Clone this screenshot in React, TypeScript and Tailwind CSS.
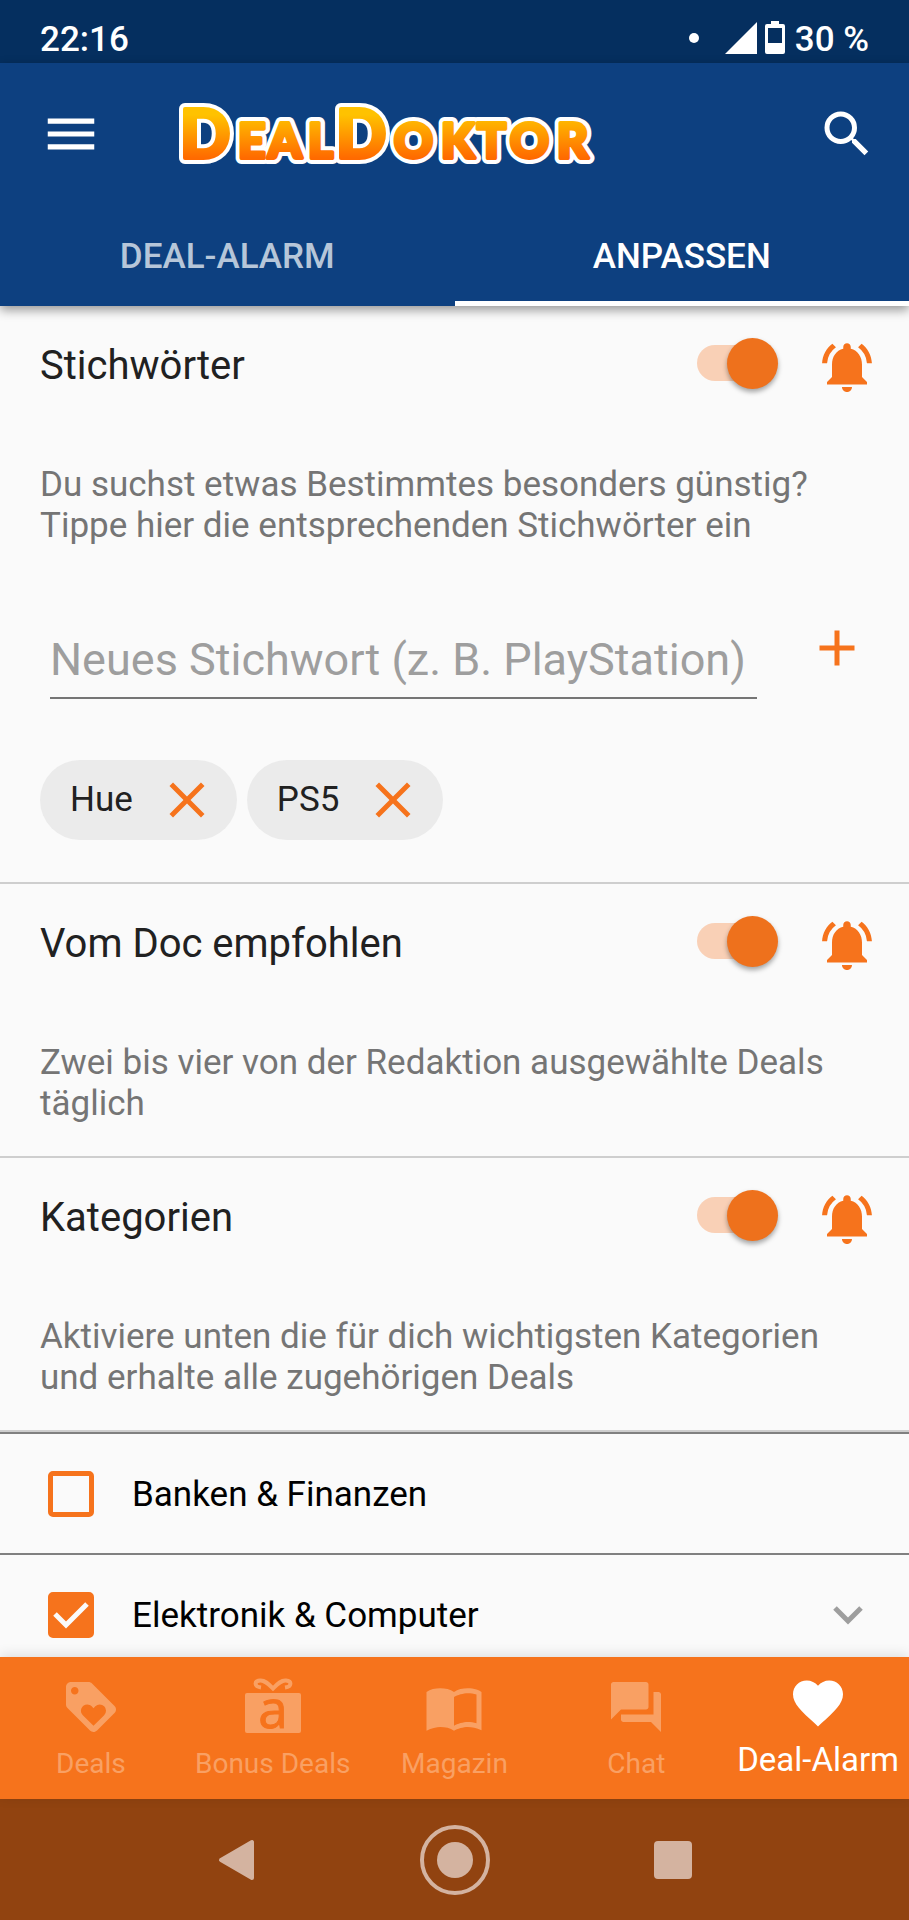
import { useState } from 'react';
import type { ReactNode } from 'react';
import { MdAdd, MdClose, MdFavorite, MdForum, MdLoyalty, MdMenu, MdNotificationsActive, MdSearch } from 'react-icons/md';

function StatusBar() {
  return (
    <div className="flex h-[63px] items-center justify-between bg-[#052f5f] px-10 pt-3 text-[35px] font-medium text-white">
      <span className="pt-[6px]">22:16</span>
      <div className="flex items-center">
        <span className="mr-[26px] size-[10px] rounded-full bg-white" />
        <svg viewBox="0 0 32 32" className="mr-2 size-8 fill-white"><path d="M32 0V32H0z" /></svg>
        <svg viewBox="0 0 20 33" className="mr-[10px] h-[33px] w-5 fill-white" fillRule="evenodd">
          <path d="M6 0h8v3h4a2 2 0 0 1 2 2v26a2 2 0 0 1-2 2H2a2 2 0 0 1-2-2V5a2 2 0 0 1 2-2h4zM3 7v15h14V7z" />
        </svg>
        <span className="pt-[6px]">30 %</span>
      </div>
    </div>
  );
}

function Logo() {
  return (
    <svg viewBox="-4 -16 430 96" className="h-24 w-[430px]" role="img" aria-label="DealDoktor">
      <defs>
        <linearGradient id="logoFill" gradientUnits="userSpaceOnUse" x1="0" y1="8" x2="0" y2="56">
          <stop offset="0.1" stopColor="#ffc200" />
          <stop offset="1" stopColor="#ff6a00" />
        </linearGradient>
      </defs>
      <g fontFamily="Lato" fontWeight="900" strokeLinejoin="round">
        {/* white outline first, gradient letters on top */}
        {[true, false].map(outline => (
          <text key={String(outline)} y="56" fill="url(#logoFill)" stroke={outline ? '#fff' : 'url(#logoFill)'} strokeWidth={outline ? 12 : 4} aria-hidden={outline}>
            <tspan x="-2" fontSize="66">D</tspan>
            <tspan x="56 86 126" fontSize="48">EAL</tspan>
            <tspan x="154" fontSize="66">D</tspan>
            <tspan x="212 259 295 328 375" fontSize="48">OKTOR</tspan>
          </text>
        ))}
      </g>
    </svg>
  );
}

function Switch({ label }: { label: string }) {
  const [on, setOn] = useState(true);
  return (
    <label className="relative flex h-[52px] w-20 items-center">
      <input type="checkbox" role="switch" aria-label={label} checked={on} onChange={() => setOn(!on)} className="peer sr-only" />
      <span className="h-9 w-[76px] rounded-full bg-gray-300 peer-checked:bg-[#f9d0b6]" />
      <span className="absolute left-0 size-[51px] rounded-full bg-white shadow-[0_3px_5px_rgba(0,0,0,0.35)] peer-checked:left-[30px] peer-checked:bg-[#ee711c]" />
    </label>
  );
}

function Section({ title, text, children }: { title: string; text: string; children?: ReactNode }) {
  return (
    <section className="border-b-2 border-[#cecece] px-10 pb-8">
      <div className="flex h-[114px] items-center">
        <h2 className="flex-1 pt-[6px] text-[40px] text-[#212121]">{title}</h2>
        <Switch label={title} />
        <button aria-label={`Benachrichtigungen ${title}`} className="-mr-2 ml-10 pt-2 text-[#f6731c]">
          <MdNotificationsActive size={60} />
        </button>
      </div>
      <p className="mt-11 text-[35px] leading-[41px] text-[#757575]">{text}</p>
      {children}
    </section>
  );
}

function Chip({ label, onRemove }: { label: string; onRemove: () => void }) {
  return (
    <span className="flex h-20 items-center gap-6 rounded-full bg-[#ebebeb] pr-5 pl-[30px] text-[35px] text-[#212121]">
      {label}
      <button aria-label={`${label} entfernen`} onClick={onRemove} className="text-[#f6731c]"><MdClose size={60} /></button>
    </span>
  );
}

function Keywords() {
  const [words, setWords] = useState(['Hue', 'PS5']);
  const [value, setValue] = useState('');

  const add = () => {
    if (!value.trim()) return;
    setWords([...words, value.trim()]);
    setValue('');
  };

  return (
    <>
      <div className="mt-[66px] flex items-start pr-0.5 pl-[10px]">
        <input
          aria-label="Neues Stichwort"
          placeholder="Neues Stichwort (z. B. PlayStation)"
          value={value}
          onChange={e => setValue(e.target.value)}
          className="h-[87px] min-w-0 flex-1 border-b-2 border-[#757575] pt-[10px] text-[45px] text-[#212121] outline-none placeholder:text-[#9e9e9e]"
        />
        <button aria-label="Hinzufügen" onClick={add} className="ml-[50px] pt-[6px] text-[#f6731c]"><MdAdd size={60} /></button>
      </div>
      <div className="mt-[61px] mb-[10px] flex gap-[10px]">
        {words.map(w => <Chip key={w} label={w} onRemove={() => setWords(words.filter(x => x !== w))} />)}
      </div>
    </>
  );
}

function Category({ label, initial, expandable }: { label: string; initial: boolean; expandable?: boolean }) {
  const [checked, setChecked] = useState(initial);
  return (
    <li className="flex h-[121px] items-center border-t-2 border-[#808080] pr-[42px] pl-12">
      <label className="flex flex-1 items-center text-[35px] text-black">
        <input type="checkbox" checked={checked} onChange={() => setChecked(!checked)} className="peer sr-only" />
        <span className="mr-[38px] flex size-[46px] items-center justify-center rounded-[5px] border-[5px] border-[#f6731c] peer-checked:bg-[#f6731c]">
          {checked && (
            <svg viewBox="0 0 36 28" className="h-7 w-9 shrink-0 fill-none stroke-[#fafafa] stroke-5"><path d="M2 13l11 11L34 3" /></svg>
          )}
        </span>
        <span className="pt-1">{label}</span>
      </label>
      {expandable && (
        <button aria-label="Aufklappen" className="px-1">
          <svg viewBox="0 0 30 20" className="h-5 w-[30px] fill-none stroke-[#9e9e9e] stroke-5"><path d="M2 3l13 13L28 3" /></svg>
        </button>
      )}
    </li>
  );
}

function GiftIcon() {
  return (
    <svg viewBox="0 0 58 60" className="h-[60px] w-[58px]">
      <defs>
        <mask id="giftLetter">
          <rect width="58" height="60" fill="#fff" />
          <text x="29" y="51" textAnchor="middle" fontFamily="Open Sans" fontSize="53" fill="#000" stroke="#000">a</text>
        </mask>
      </defs>
      <rect x="1" y="16" width="56" height="40" rx="2" fill="currentColor" mask="url(#giftLetter)" />
      <path d="M17 10.5c-7-1-7-6.5-1-7 5-.5 9 4 13 8 4-4 8-8.5 13-8 6 .5 6 6-1 7" fill="none" stroke="currentColor" strokeWidth="4" />
    </svg>
  );
}

function BookIcon() {
  return (
    <svg viewBox="0 0 24 24" className="size-[60px] fill-current">
      <path d="M21 5c-1.11-.35-2.33-.5-3.5-.5-1.95 0-4.05.4-5.5 1.5-1.45-1.1-3.55-1.5-5.5-1.5S2.45 4.9 1 6v15.5C3 20.45 5.05 20 6.5 20c1.95 0 4.05.4 5.5 1.5 1.35-.85 3.8-1.5 5.5-1.5 1.65 0 3.5.3 5.5 1.25V6c-.6-.45-1.25-.75-2-1zm0 13.5c-1.1-.35-2.3-.5-3.5-.5-1.7 0-4.15.65-5.5 1.5V8c1.35-.85 3.8-1.5 5.5-1.5 1.2 0 2.4.15 3.5.5v11.5z" />
    </svg>
  );
}

const tabs = [
  { label: 'Deals', icon: <MdLoyalty size={60} /> },
  { label: 'Bonus Deals', icon: <GiftIcon /> },
  { label: 'Magazin', icon: <BookIcon /> },
  { label: 'Chat', icon: <MdForum size={60} /> },
];

export default function App() {
  return (
    <div className="flex h-screen flex-col bg-[#fafafa] font-['Roboto',sans-serif]">
      <StatusBar />
      <header className="relative z-10 bg-[#0d4080] text-white shadow-[0_4px_10px_rgba(0,0,0,0.4)]">
        <div className="flex h-[142px] items-center pr-8 pl-10">
          <button aria-label="Menü"><MdMenu size={62} /></button>
          <div className="ml-[76px] flex-1"><Logo /></div>
          <button aria-label="Suche"><MdSearch size={60} /></button>
        </div>
        <div role="tablist" className="flex h-[101px] text-[35px] font-medium">
          <button role="tab" aria-selected={false} className="flex-1 border-b-[5px] border-transparent pt-2 text-[#b6c6d9]">DEAL-ALARM</button>
          <button role="tab" aria-selected className="flex-1 border-b-[5px] border-white pt-2">ANPASSEN</button>
        </div>
      </header>

      <main className="min-h-0 flex-1 overflow-hidden">
        <Section title="Stichwörter" text="Du suchst etwas Bestimmtes besonders günstig? Tippe hier die entsprechenden Stichwörter ein">
          <Keywords />
        </Section>
        <Section title="Vom Doc empfohlen" text="Zwei bis vier von der Redaktion ausgewählte Deals täglich" />
        <Section title="Kategorien" text="Aktiviere unten die für dich wichtigsten Kategorien und erhalte alle zugehörigen Deals" />
        <ul>
          <Category label="Banken & Finanzen" initial={false} />
          <Category label="Elektronik & Computer" initial expandable />
        </ul>
      </main>

      <nav className="relative z-10 flex h-[142px] bg-[#f6731c] text-[28px] shadow-[0_-2px_12px_rgba(0,0,0,0.12)]">
        {tabs.map(t => (
          <a key={t.label} href="#" className="flex flex-1 flex-col items-center pt-5 whitespace-nowrap text-[#f9a063]">
            {t.icon}
            <span className="mt-[6px]">{t.label}</span>
          </a>
        ))}
        <a href="#" aria-current="page" className="flex flex-1 flex-col items-center pt-4 text-[33px] whitespace-nowrap text-white">
          <MdFavorite size={60} />
          <span className="mt-0.5">Deal-Alarm</span>
        </a>
      </nav>

      <div className="flex h-[121px] items-center justify-center gap-[164px] bg-[#914310] text-[#d4b3a0]">
        <button aria-label="Zurück">
          <svg viewBox="0 0 38 44" className="h-11 w-[38px] fill-current stroke-current stroke-4" strokeLinejoin="round"><path d="M3 22L34 4v36z" /></svg>
        </button>
        <button aria-label="Startseite">
          <svg viewBox="0 0 70 70" className="size-[70px]">
            <circle cx="35" cy="35" r="33" fill="none" stroke="currentColor" strokeWidth="4" />
            <circle cx="35" cy="35" r="18" fill="currentColor" />
          </svg>
        </button>
        <button aria-label="Übersicht" className="size-[38px] rounded-sm bg-current" />
      </div>
    </div>
  );
}
